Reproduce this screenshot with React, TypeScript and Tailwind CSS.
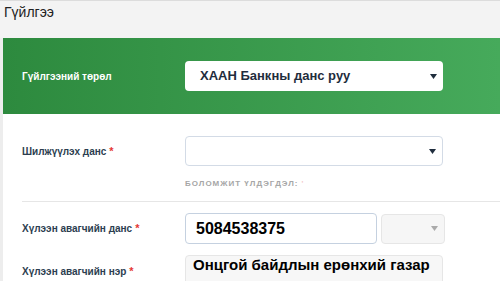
import React from 'react'

const FONT = { fontFamily: '"Liberation Sans", Arial, sans-serif' }

function Caret({ color = '#1f2d3d' }: { color?: string }) {
  return (
    <svg width="7" height="5" viewBox="0 0 7 5" className="shrink-0">
      <path d="M0 0 L7 0 L3.5 5 Z" fill={color} />
    </svg>
  )
}

function Label({ text, req }: { text: string; req?: boolean }) {
  return (
    <div className="w-[163px] shrink-0 text-[10px] font-bold text-[#2c3e50]">
      {text}
      {req && <span className="text-[#e53935] ml-[3px] text-[11px]">*</span>}
    </div>
  )
}

export default function App() {
  return (
    <div style={FONT} className="w-[500px] h-[281px] overflow-hidden bg-[#ededed] border-t border-[#dcdcdc] flex flex-col">
      {/* гарчиг */}
      <div className="h-[37px] shrink-0 bg-[#f3f3f3] pl-[4px] pt-[1px] text-[14px] text-[#222]">Гүйлгээ</div>

      <div className="flex-1 ml-[3px] bg-white flex flex-col">
        {/* гүйлгээний төрөл */}
        <div className="h-[76px] shrink-0 flex items-center pl-[19px] bg-gradient-to-r from-[#2d8a3e] to-[#46aa5b]">
          <div className="w-[163px] shrink-0 text-[10px] font-bold text-white">Гүйлгээний төрөл</div>
          <div className="w-[258px] h-[30px] rounded-[4px] bg-white flex items-center justify-between pl-[15px] pr-[6px]">
            <span className="text-[13px] font-bold text-[#1f2d3d]">ХААН Банкны данс руу</span>
            <Caret />
          </div>
        </div>

        {/* шилжүүлэх данс */}
        <div className="pl-[19px] pt-[22px]">
          <div className="flex items-center">
            <Label text="Шилжүүлэх данс" req />
            <div className="w-[258px] h-[30px] rounded-[4px] border border-[#d3dbe6] flex items-center justify-end pr-[6px]">
              <Caret />
            </div>
          </div>
          <div className="ml-[163px] mt-[12px] text-[8px] font-bold tracking-[1px] text-[#a6a6a6]">
            БОЛОМЖИТ ҮЛДЭГДЭЛ:<span className="text-[#f3c9c9] ml-[3px]">'</span>
          </div>
        </div>

        <div className="ml-[19px] mt-[11px] border-t border-[#e6e6e6]" />

        {/* хүлээн авагч */}
        <div className="pl-[19px] pt-[11px] flex flex-col gap-[11px]">
          <div className="flex items-center">
            <Label text="Хүлээн авагчийн данс" req />
            <div className="w-[192px] h-[31px] rounded-[4px] border border-[#c5d1e0] flex items-center pl-[10px] text-[16px] font-bold text-black">
              5084538375
            </div>
            <div className="ml-[4px] w-[64px] h-[30px] rounded-[4px] border border-[#e6e6e6] bg-[#f6f6f6] flex items-center justify-end pr-[6px]">
              <Caret color="#aaaaaa" />
            </div>
          </div>
          <div className="flex items-start">
            <div className="pt-[8px]">
              <Label text="Хүлээн авагчийн нэр" req />
            </div>
            <div className="w-[258px] h-[40px] rounded-t-[4px] border border-[#e6e6e6] bg-[#f7f7f7] pl-[7px] leading-[18px] text-[15px] font-bold text-black whitespace-nowrap overflow-hidden">
              Онцгой байдлын ерөнхий газар
            </div>
          </div>
        </div>
      </div>
    </div>
  )
}
